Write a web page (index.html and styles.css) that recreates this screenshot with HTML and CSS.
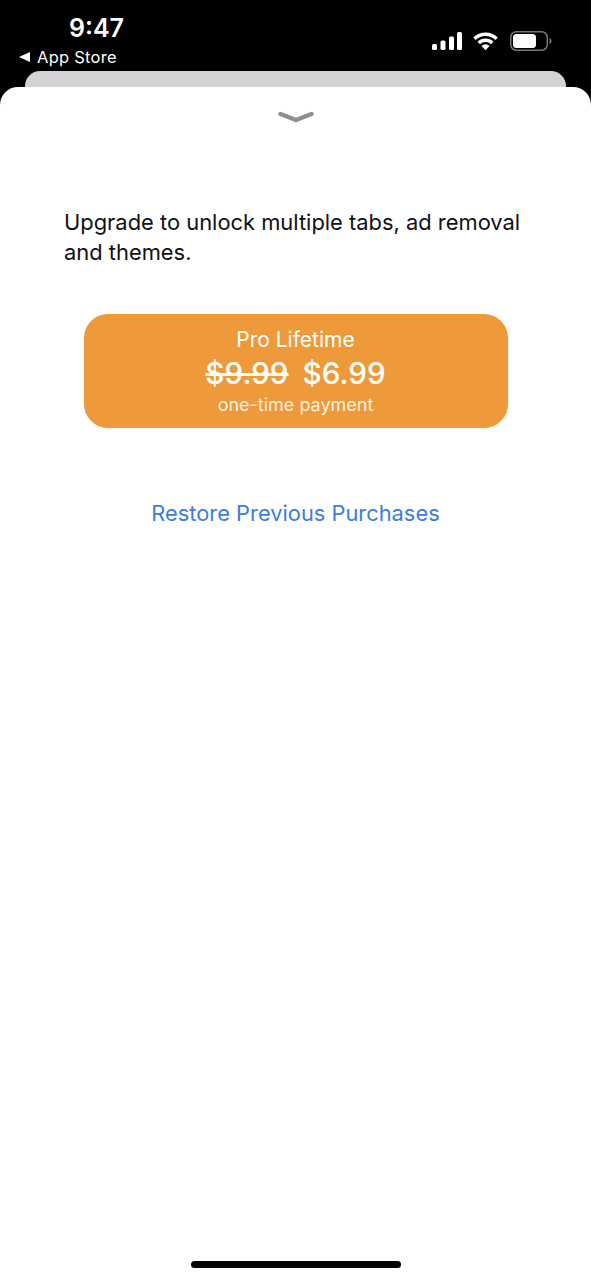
FILE: index.html
```html
<!DOCTYPE html>
<html>
    <head>
        <meta charset="utf-8">
        <link rel="stylesheet" href="styles.css">
        <title>Upgrade</title>
    </head>
    <body>
        <div class="statusbar">
            <div class="statusLeft">
                <div class="clock">9:47</div>
                <div class="backLink"><span class="backArrow"></span>App Store</div>
            </div>
            <div class="statusIcons">
                <svg class="signal" width="30" height="18" viewBox="0 0 30 18">
                    <rect x="0" y="12" width="5" height="6" rx="1.5"/>
                    <rect x="8.5" y="8.5" width="5" height="9.5" rx="1.5"/>
                    <rect x="17" y="4.5" width="5" height="13.5" rx="1.5"/>
                    <rect x="25" y="0" width="5" height="18" rx="1.5"/>
                </svg>
                <svg class="wifi" width="25" height="19" viewBox="0 0 26 19">
                    <path d="M1.5 6.6 A16.5 16.5 0 0 1 24.5 6.6" />
                    <path d="M6 11 A10 10 0 0 1 20 11" />
                    <path class="wifiDot" d="M13 18.6 L8.8 14.2 A6 6 0 0 1 17.2 14.2 Z" />
                </svg>
                <svg class="battery" width="42" height="20" viewBox="0 0 42 20">
                    <rect class="batteryShell" x="0.75" y="0.75" width="36.5" height="18.5" rx="5.5"/>
                    <rect x="3" y="3" width="23" height="14" rx="3.5"/>
                    <path class="batteryCap" d="M39.5 7 C41 7.6 41.5 8.8 41.5 10 C41.5 11.2 41 12.4 39.5 13 Z"/>
                </svg>
            </div>
        </div>
        <div class="sheetBehind"></div>
        <div class="sheet">
            <div class="grabber">
                <svg width="36" height="14" viewBox="0 0 36 14">
                    <path d="M2.5 3 L18 9 L33.5 3"/>
                </svg>
            </div>
            <p class="intro">Upgrade to unlock multiple tabs, ad removal and themes.</p>
            <a class="buyButton" href="#">
                <span class="planName">Pro Lifetime</span>
                <span class="price"><s>$9.99</s><span class="salePrice">$6.99</span></span>
                <span class="planNote">one-time payment</span>
            </a>
            <a class="restore" href="#">Restore Previous Purchases</a>
            <div class="homeBar"></div>
        </div>
    </body>
</html>
```

FILE: styles.css
```css
html {background: #000;}
body {
    margin: 0;
    width: 591px;
    height: 1280px;
    background: #000;
    font-family: Inter, "Liberation Sans", sans-serif;
    overflow: hidden;
    display: flex;
    flex-direction: column;
}
.statusbar {
    height: 71px;
    box-sizing: border-box;
    padding: 14px 39px 0 19px;
    display: flex;
    justify-content: space-between;
    color: #fff;
}
.clock {
    font-size: 25px;
    line-height: 28px;
    font-weight: 600;
    padding-left: 50px;
}
.backLink {
    font-size: 16.5px;
    line-height: 20px;
    margin-top: 5px;
    display: flex;
    align-items: center;
    letter-spacing: 0.25px;
}
.backArrow {
    width: 0;
    height: 0;
    border-style: solid;
    border-width: 5.5px 11px 5.5px 0;
    border-color: transparent #fff transparent transparent;
    margin-right: 7px;
}
.statusIcons {
    display: flex;
    align-items: center;
    gap: 12px;
    height: 24px;
    margin-top: 15px;
}
.signal {margin-right: -1px;}
.signal rect {fill: #fff;}
.wifi path {fill: none; stroke: #fff; stroke-width: 3.6;}
.wifi .wifiDot {fill: #fff; stroke: none;}
.battery rect {fill: #fff;}
.battery .batteryShell {fill: none; stroke: #77777a; stroke-width: 1.5;}
.battery .batteryCap {fill: #77777a;}
.sheetBehind {
    height: 16px;
    margin: 0 25px;
    background: #d2d2d7;
    border-radius: 15px 15px 0 0;
    flex-shrink: 0;
}
.sheet {
    flex: 1;
    background: #fff;
    border-radius: 18px 18px 0 0;
    display: flex;
    flex-direction: column;
    align-items: center;
    position: relative;
}
.grabber {
    height: 14px;
    margin-top: 24px;
}
.grabber svg {display: block;}
.grabber path {fill: none; stroke: #8e8e93; stroke-width: 4.5; stroke-linecap: round; stroke-linejoin: round;}
.intro {
    margin: 82px 0 0;
    width: 463px;
    font-size: 21.9px;
    line-height: 30px;
    color: #111;
}
.buyButton {
    margin-top: 47px;
    width: 424px;
    height: 114px;
    background: #ef9a3a;
    border-radius: 24px;
    color: #fff;
    text-decoration: none;
    display: flex;
    flex-direction: column;
    align-items: center;
    justify-content: center;
}
.planName {font-size: 21px; line-height: 28px;}
.price {font-size: 29.7px; line-height: 38px; font-weight: 500;}
.price s {text-decoration-thickness: 3px;}
.salePrice {margin-left: 14px;}
.planNote {font-size: 18px; line-height: 24px; opacity: 0.85; margin-top: 1px;}
.restore {
    margin-top: 70px;
    font-size: 21.85px;
    line-height: 30px;
    color: #3b7ddd;
    text-decoration: none;
}
.homeBar {
    position: absolute;
    left: 191px;
    bottom: 12px;
    width: 210px;
    height: 7px;
    border-radius: 4px;
    background: #000;
}
```
